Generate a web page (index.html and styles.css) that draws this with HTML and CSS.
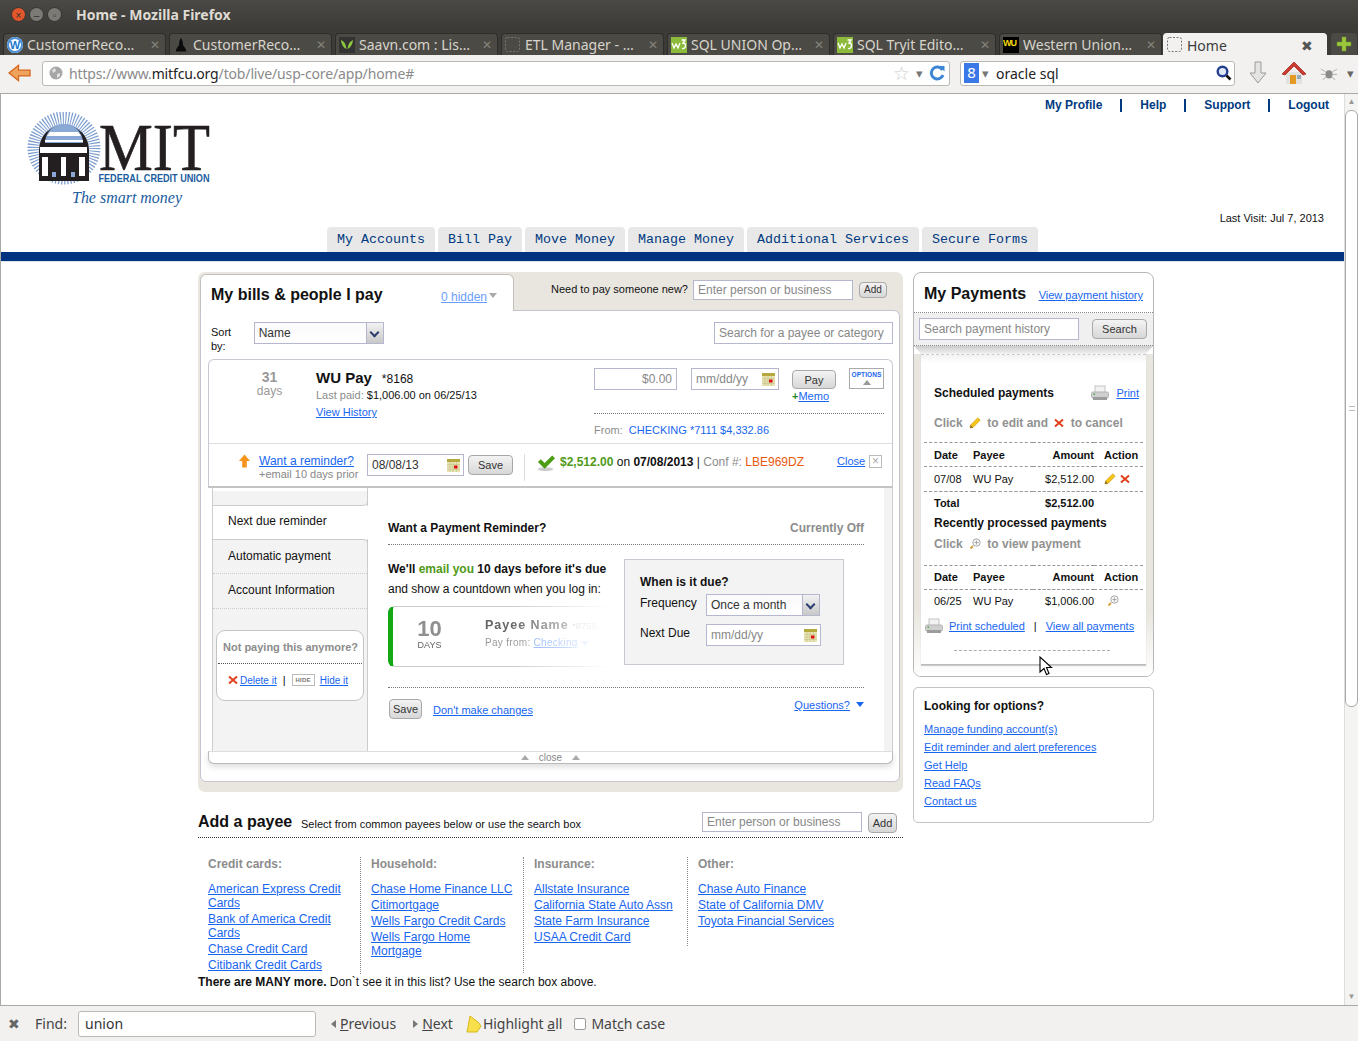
FILE: index.html
```html
<!DOCTYPE html>
<html lang="en">
<head>
<meta charset="utf-8">
<title>Home - Mozilla Firefox</title>
<link rel="stylesheet" href="styles.css">
</head>
<body>
<svg class="defs" width="0" height="0" aria-hidden="true">
  <symbol id="i-cal" viewBox="0 0 13 13">
    <rect x="0" y="0" width="13" height="13" fill="#e9e4b4"/>
    <rect x="0" y="0" width="13" height="3" fill="#b5a93e"/>
    <path d="M0 5.5h13M0 8h13M0 10.5h13M3 3v10M6 3v10M9.500 3v10" stroke="#c9c48c" stroke-width=".7"/>
    <rect x="7" y="6.500" width="3.500" height="3" fill="#e01010"/>
  </symbol>
  <symbol id="i-pencil" viewBox="0 0 12 12">
    <path d="M8.800.8l2.400 2.400L4 10.400 1 11l.6-3z" fill="#f5c518" stroke="#c9930a" stroke-width=".6"/>
    <path d="M1.600 8L1 11l3-.6z" fill="#8a6a20"/>
  </symbol>
  <symbol id="i-x" viewBox="0 0 10 10">
    <path d="M1 1.500L9 8.500M9 1.500L1 8.500" stroke="#e0401c" stroke-width="2"/>
  </symbol>
  <symbol id="i-mag" viewBox="0 0 12 12">
    <path d="M1.500 10.500L4 8" stroke="#d9a040" stroke-width="2"/>
    <circle cx="7.500" cy="4.500" r="3.700" fill="#f4f4f4" stroke="#aaa"/>
    <path d="M5.500 4.500h4M7.500 2.500v4" stroke="#999" stroke-width=".8"/>
  </symbol>
  <symbol id="i-printer" viewBox="0 0 18 16">
    <rect x="4" y="1" width="10" height="7" fill="#f2f2f2" stroke="#c4c4c4"/>
    <rect x="0.500" y="7" width="17" height="6" rx="1.500" fill="#cfcfcf" stroke="#b4b4b4"/>
    <rect x="2" y="12" width="14" height="3" fill="#9c9c9c"/>
    <rect x="2.500" y="8.500" width="1.500" height="1.500" fill="#3ab53a"/>
  </symbol>
  <symbol id="i-w3" viewBox="0 0 16 16">
    <rect width="16" height="16" fill="#8cbb3c"/>
    <path d="M1 6l2 5 2-4 2 4 2-5" fill="none" stroke="#fff" stroke-width="1.300"/>
    <path d="M10.500 3h3.500l-2 3c1.500 0 2.500 1 2.500 2.500S13.500 12 11 11.500" fill="none" stroke="#fff" stroke-width="1.400"/>
  </symbol>
  <symbol id="i-dash" viewBox="0 0 16 16">
    <rect x=".5" y=".5" width="14" height="14" rx="2" fill="none" stroke="#777" stroke-dasharray="2 1.500"/>
  </symbol>
</svg>

<div class="window">
  <header class="titlebar">
    <div class="wm">
      <span class="wm-btn wm-close">×</span>
      <span class="wm-btn">–</span>
      <span class="wm-btn">▫</span>
    </div>
    <div class="wintitle">Home - Mozilla Firefox</div>
  </header>

  <div class="tabstrip">
    <div class="tab"><span class="fav fav-w">W</span><span class="tab-label">CustomerReco…</span><span class="tab-x">✕</span></div>
    <div class="tab">
      <svg class="fav" viewBox="0 0 16 16"><path d="M8 1c1.500 2 2 4 2 7l3 4.500v2H3v-2L6 8c0-3 .5-5 2-7z" fill="#0c0c0c"/></svg>
      <span class="tab-label">CustomerReco…</span><span class="tab-x">✕</span></div>
    <div class="tab">
      <svg class="fav" viewBox="0 0 16 16"><rect width="16" height="16" fill="#333"/><path d="M2 3c3 1 5 4 5.500 9C5 11 2.500 8 2 3zM14 3c-3 1-5 4-5.500 9C11 11 13.500 8 14 3z" fill="#8fc63f"/></svg>
      <span class="tab-label">Saavn.com : Lis…</span><span class="tab-x">✕</span></div>
    <div class="tab"><svg class="fav"><use href="#i-dash"/></svg><span class="tab-label">ETL Manager - …</span><span class="tab-x">✕</span></div>
    <div class="tab"><svg class="fav"><use href="#i-w3"/></svg><span class="tab-label">SQL UNION Op…</span><span class="tab-x">✕</span></div>
    <div class="tab"><svg class="fav"><use href="#i-w3"/></svg><span class="tab-label">SQL Tryit Edito…</span><span class="tab-x">✕</span></div>
    <div class="tab">
      <span class="fav fav-wu">WU</span>
      <span class="tab-label">Western Union…</span><span class="tab-x">✕</span></div>
    <div class="tab tab-active"><svg class="fav"><use href="#i-dash"/></svg><span class="tab-label">Home</span><span class="tab-x">✖</span></div>
    <div class="tab-new">
      <svg viewBox="0 0 16 16" width="16" height="16"><path d="M6 1h4v5h5v4h-5v5H6v-5H1V6h5z" fill="#9bc83c" stroke="#6f9424" stroke-width=".6"/></svg>
    </div>
  </div>

  <div class="navbar">
    <svg class="back" viewBox="0 0 24 20" width="23" height="20"><path d="M1 10L11 2v5h12v6H11v5z" fill="#f0a35c" stroke="#d2661d" stroke-width="1.300"/></svg>
    <div class="urlbar">
      <svg class="globe" viewBox="0 0 14 14" width="14" height="14"><circle cx="7" cy="7" r="6.500" fill="#a6a6a6"/><path d="M3 4l3-2 1 3-3 2zM8 8l3-1 0 3-3 2z" fill="#e2e2e2"/></svg>
      <span class="url">https://www.<b>mitfcu.org</b>/tob/live/usp-core/app/home#</span>
      <span class="star">☆</span>
      <span class="dd">▾</span>
      <svg class="reload" viewBox="0 0 16 16" width="16" height="16"><path d="M13.500 5A6 6 0 1 0 14 10" fill="none" stroke="#3c86d4" stroke-width="3"/><path d="M10 1l5.500 0 0 5.500z" fill="#3c86d4"/></svg>
    </div>
    <div class="searchbar">
      <span class="goog">8</span>
      <span class="dd">▾</span>
      <span class="search-text">oracle sql</span>
      <svg class="mag" viewBox="0 0 16 16" width="16" height="16"><circle cx="6.500" cy="6.500" r="4.800" fill="#dfe8f6" stroke="#243f8f" stroke-width="2.400"/><path d="M10.500 10.500l4 4" stroke="#111" stroke-width="2.600"/></svg>
    </div>
    <svg class="dl" viewBox="0 0 20 26" width="20" height="26"><path d="M7 2h6v11h5l-8 10-8-10h5z" fill="#e4e4e2" stroke="#9a9a98"/></svg>
    <svg class="home" viewBox="0 0 26 26" width="26" height="26"><rect x="5" y="12" width="16" height="12" fill="#e2e2e0"/><rect x="9" y="15" width="6" height="9" fill="#e49a22"/><rect x="16" y="15" width="4" height="4" fill="#9ab"/><path d="M1 14L13 2l12 12-3 1-9-9-9 9z" fill="#cc3a30" stroke="#9c2318" stroke-width=".7"/></svg>
    <svg class="bug" viewBox="0 0 20 16" width="18" height="15"><ellipse cx="10" cy="9" rx="4" ry="4.500" fill="#8b8b8b"/><path d="M6 6L1 3M14 6l5-3M6 9H1M14 9h5M7 12l-4 3M13 12l4 3" stroke="#aaa"/></svg>
    <span class="menu-dd">▾</span>
  </div>

  <div class="viewport">
    <main class="page">
      <div class="head">
        <a class="logo" href="#" aria-label="MIT Federal Credit Union">
          <svg viewBox="0 0 184 96" width="184" height="96">
            <circle cx="38" cy="36" r="29" fill="none" stroke="#7b9dcf" stroke-width="15" stroke-dasharray="1.100 1.500"/>
            <circle cx="38" cy="36" r="24" fill="#8aa8d6"/>
            <path d="M13 38a25 25 0 0 1 50 0v31H13z" fill="#231f20"/>
            <path d="M19 31a19 19 0 0 1 38 0z" fill="#8aa8d6"/>
            <path d="M24 20h28l3 4H21zM19 28h38v2H19z" fill="#fff"/>
            <rect x="14" y="35" width="47" height="6" fill="#fff"/>
            <path d="M16 45h6v19h-6zM35 45h5v19h-5zM53 45h6v19h-6z" fill="#fff"/>
            <path d="M26 60h4v5h-4zM45 60h4v5h-4z" fill="#8aa8d6"/>
            <rect x="9" y="69" width="10" height="0" fill="#231f20"/>
            <text class="logo-mit" x="73" y="58" textLength="111" lengthAdjust="spacingAndGlyphs">MIT</text>
            <text class="logo-fcu" x="72.500" y="70" textLength="111" lengthAdjust="spacingAndGlyphs">FEDERAL CREDIT UNION</text>
            <text class="logo-tag" x="46" y="91" textLength="110" lengthAdjust="spacingAndGlyphs">The smart money</text>
          </svg>
        </a>
        <div class="head-right">
          <nav class="util">
            <a href="#">My Profile</a>
            <a href="#">Help</a>
            <a href="#">Support</a>
            <a href="#">Logout</a>
          </nav>
          <div class="lastvisit">Last Visit: Jul 7, 2013</div>
        </div>
      </div>

      <nav class="mainnav">
        <a href="#">My Accounts</a>
        <a href="#">Bill Pay</a>
        <a href="#">Move Money</a>
        <a href="#">Manage Money</a>
        <a href="#">Additional Services</a>
        <a href="#">Secure Forms</a>
      </nav>
      <div class="bluebar"></div>

      <div class="columns">
        <div class="col-left">
          <section class="bills">
            <div class="bills-top">
              <div class="bills-tab">
                <h1>My bills &amp; people I pay</h1>
                <a class="hidden-link" href="#">0 hidden</a><span class="tri-grey"></span>
              </div>
              <div class="newpay">
                <span class="newpay-label">Need to pay someone new?</span>
                <input class="field newpay-input" placeholder="Enter person or business">
                <button class="btn btn-small">Add</button>
              </div>
            </div>
            <div class="bills-panel">
              <div class="sortrow">
                <span class="sort-label">Sort by:</span>
                <div class="select sort-select"><span>Name</span><i class="select-arrow"></i></div>
                <input class="field payee-search" placeholder="Search for a payee or category">
              </div>

              <div class="card">
                <div class="card-top">
                  <div class="days"><b>31</b><span>days</span></div>
                  <div class="payee">
                    <div class="payee-name"><b>WU Pay</b><span>*8168</span></div>
                    <div class="lastpaid"><span class="grey">Last paid:</span> $1,006.00 on 06/25/13</div>
                    <a class="small-link" href="#">View History</a>
                  </div>
                  <div class="payform">
                    <div class="payform-row">
                      <input class="field amt" placeholder="$0.00">
                      <div class="field date-field date-pay"><span class="ph">mm/dd/yy</span><svg class="cal"><use href="#i-cal"/></svg></div>
                      <div class="paybox">
                        <button class="btn btn-pay">Pay</button>
                        <div class="memo"><span class="plus">+</span><a href="#">Memo</a></div>
                      </div>
                      <div class="options">OPTIONS<i></i></div>
                    </div>
                    <div class="from"><span class="grey">From:</span> <a href="#">CHECKING *7111 $4,332.86</a></div>
                  </div>
                </div>
                <div class="card-bottom">
                  <svg class="up-arrow" viewBox="0 0 14 14" width="13" height="14"><path d="M7 0l6 7H9.500v7h-5V7H1z" fill="#f7941d"/></svg>
                  <div class="reminder-link"><a href="#">Want a reminder?</a><span>+email 10 days prior</span></div>
                  <div class="field date-field date-rem"><span>08/08/13</span><svg class="cal"><use href="#i-cal"/></svg></div>
                  <button class="btn btn-save">Save</button>
                  <div class="conf">
                    <svg class="check" viewBox="0 0 20 18" width="19" height="18"><ellipse cx="9" cy="15.500" rx="8" ry="2" fill="#ccc"/><path d="M1 8l3-3 4 4 8-8 3 3L8 15z" fill="#4b9d14"/></svg>
                    <span class="conf-text"><b class="green">$2,512.00</b> on <b>07/08/2013</b> | <span class="grey">Conf #:</span> <span class="orange">LBE969DZ</span></span>
                  </div>
                  <a class="close-link" href="#">Close</a>
                  <span class="close-box">×</span>
                </div>
              </div>

              <div class="drawer">
                <aside class="side">
                  <div class="side-cap"></div>
                  <div class="side-item side-active">Next due reminder</div>
                  <div class="side-rest">
                    <div class="side-item">Automatic payment</div>
                    <div class="side-item">Account Information</div>
                    <div class="notpaying">
                      <div class="notpaying-title">Not paying this anymore?</div>
                      <div class="notpaying-links">
                        <svg class="ic-x"><use href="#i-x"/></svg><a href="#">Delete it</a>
                        <span class="sep">|</span>
                        <span class="hide-badge">HIDE</span><a href="#">Hide it</a>
                      </div>
                    </div>
                  </div>
                </aside>
                <div class="drawer-main">
                  <div class="dm-head"><b>Want a Payment Reminder?</b><b class="grey">Currently Off</b></div>
                  <div class="dm-body">
                    <div class="dm-left">
                      <p class="dm-line"><b>We'll <span class="green">email you</span> 10 days before it's due</b></p>
                      <p class="dm-line">and show a countdown when you log in:</p>
                      <div class="preview">
                        <div class="preview-days"><b>10</b><span>DAYS</span></div>
                        <div class="preview-info">
                          <div class="preview-name"><b>Payee Name</b> <span>*8756</span></div>
                          <div class="preview-from">Pay from: <a href="#">Checking</a> <i></i></div>
                        </div>
                      </div>
                    </div>
                    <div class="duebox">
                      <div class="duebox-title">When is it due?</div>
                      <div class="due-row"><span class="due-label">Frequency</span><div class="select freq-select"><span>Once a month</span><i class="select-arrow"></i></div></div>
                      <div class="due-row"><span class="due-label">Next Due</span><div class="field date-field date-due"><span class="ph">mm/dd/yy</span><svg class="cal"><use href="#i-cal"/></svg></div></div>
                    </div>
                  </div>
                  <div class="dm-foot">
                    <button class="btn btn-save2">Save</button>
                    <a href="#" class="nochange">Don't make changes</a>
                    <a href="#" class="questions">Questions? <span> </span></a><i class="tri-blue"></i>
                  </div>
                </div>
                <div class="drawer-strip"></div>
              </div>
              <div class="closebar"><i class="tri-up"></i><span>close</span><i class="tri-up"></i></div>
            </div>
          </section>

          <section class="addpayee">
            <div class="add-head">
              <h2>Add a payee</h2>
              <span class="add-sub">Select from common payees below or use the search box</span>
              <input class="field add-input" placeholder="Enter person or business">
              <button class="btn btn-add">Add</button>
            </div>
            <div class="add-cols">
              <div class="add-col">
                <h3>Credit cards:</h3>
                <a href="#">American Express Credit Cards</a>
                <a href="#">Bank of America Credit Cards</a>
                <a href="#">Chase Credit Card</a>
                <a href="#">Citibank Credit Cards</a>
              </div>
              <div class="add-col">
                <h3>Household:</h3>
                <a href="#">Chase Home Finance LLC</a>
                <a href="#">Citimortgage</a>
                <a href="#">Wells Fargo Credit Cards</a>
                <a href="#">Wells Fargo Home Mortgage</a>
              </div>
              <div class="add-col">
                <h3>Insurance:</h3>
                <a href="#">Allstate Insurance</a>
                <a href="#">California State Auto Assn</a>
                <a href="#">State Farm Insurance</a>
                <a href="#">USAA Credit Card</a>
              </div>
              <div class="add-col add-col-last">
                <h3>Other:</h3>
                <a href="#">Chase Auto Finance</a>
                <a href="#">State of California DMV</a>
                <a href="#">Toyota Financial Services</a>
              </div>
            </div>
            <p class="many"><b>There are MANY more.</b> Don`t see it in this list? Use the search box above.</p>
          </section>
        </div>

        <div class="col-right">
          <section class="payments">
            <div class="pay-head"><h2>My Payments</h2><a href="#">View payment history</a></div>
            <div class="pay-search">
              <input class="field hist-input" placeholder="Search payment history">
              <button class="btn btn-search">Search</button>
            </div>
            <div class="tray"></div>
            <div class="paper-wrap">
              <div class="paper">
                <div class="sched-head"><b>Scheduled payments</b><svg class="printer"><use href="#i-printer"/></svg><a href="#">Print</a></div>
                <div class="hint">Click <svg class="ic-pencil"><use href="#i-pencil"/></svg> to edit and <svg class="ic-x"><use href="#i-x"/></svg> to cancel</div>
                <table class="ptable">
                  <thead><tr><th class="c-date">Date</th><th class="c-payee">Payee</th><th class="c-amt">Amount</th><th class="c-act">Action</th></tr></thead>
                  <tbody><tr class="row-data"><td class="c-date">07/08</td><td>WU Pay</td><td class="c-amt">$2,512.00</td><td class="c-act"><svg class="ic-pencil"><use href="#i-pencil"/></svg><svg class="ic-x ic-x-gap"><use href="#i-x"/></svg></td></tr></tbody>
                  <tfoot><tr class="row-total"><td class="c-date">Total</td><td></td><td class="c-amt">$2,512.00</td><td></td></tr></tfoot>
                </table>
                <div class="recent-title">Recently processed payments</div>
                <div class="hint hint2">Click <svg class="ic-mag"><use href="#i-mag"/></svg> to view payment</div>
                <table class="ptable">
                  <thead><tr><th class="c-date">Date</th><th class="c-payee">Payee</th><th class="c-amt">Amount</th><th class="c-act">Action</th></tr></thead>
                  <tbody><tr class="row-plain"><td class="c-date">06/25</td><td>WU Pay</td><td class="c-amt">$1,006.00</td><td class="c-act"><svg class="ic-mag"><use href="#i-mag"/></svg></td></tr></tbody>
                </table>
                <div class="paper-links"><svg class="printer"><use href="#i-printer"/></svg><a href="#">Print scheduled</a><span>|</span><a href="#">View all payments</a></div>
                <div class="paper-dash"></div>
              </div>
            </div>
          </section>

          <section class="options-box">
            <h3>Looking for options?</h3>
            <a href="#">Manage funding account(s)</a>
            <a href="#">Edit reminder and alert preferences</a>
            <a href="#">Get Help</a>
            <a href="#">Read FAQs</a>
            <a href="#">Contact us</a>
          </section>
        </div>
      </div>
      <svg class="cursor" viewBox="0 0 14 20" width="14" height="20"><path d="M1 1v15l4-3.500 2.500 6 2.500-1-2.500-6H12.500z" fill="#fff" stroke="#000" stroke-width="1.100"/></svg>
    </main>
    <div class="scrollbar">
      <div class="sb-btn">▲</div>
      <div class="sb-thumb"><span></span></div>
      <div class="sb-track"></div>
      <div class="sb-btn">▼</div>
    </div>
  </div>

  <footer class="findbar">
    <span class="find-close">✖</span>
    <span class="find-label">Find:</span>
    <input class="find-input" value="union">
    <span class="find-tri find-prev"></span><span class="find-btn"><u>P</u>revious</span>
    <span class="find-tri find-next"></span><span class="find-btn"><u>N</u>ext</span>
    <svg class="hl" viewBox="0 0 16 18" width="16" height="18"><path d="M4 1l8 6 3 4-4 6H1l1-5z" fill="#f7e04a" stroke="#d8b51c"/></svg>
    <span class="find-btn find-hl">Highlight <u>a</u>ll</span>
    <span class="find-check"></span>
    <span class="find-btn">Mat<u>c</u>h case</span>
  </footer>
</div>
</body>
</html>
```

FILE: styles.css
```css
* { box-sizing: border-box; }
html, body { margin: 0; padding: 0; height: 100%; overflow: hidden; }
body { font-family: "Liberation Sans", Arial, sans-serif; font-size: 12px; color: #111; background: #fff; }
a { color: #1766f0; }
b { font-weight: bold; }
p { margin: 0; }
h1, h2, h3 { margin: 0; }
.defs { position: absolute; }
.window { width: 1358px; height: 1041px; display: flex; flex-direction: column; }

/* ---- window chrome ---- */
.titlebar { height: 28px; background: linear-gradient(#4a4945, #3c3b37); display: flex; align-items: center; padding-left: 11px; flex: none; }
.wm { display: flex; gap: 3px; width: 65px; }
.wm-btn { width: 15px; height: 15px; border-radius: 50%; background: #7b7a74; color: #333; font-size: 10px; line-height: 15px; text-align: center; border: 1px solid #333; }
.wm-close { background: #e2562b; }
.wintitle { font-family: "Noto Sans", sans-serif; font-weight: 700; font-size: 14px; color: #dfdbd2; }

.tabstrip { height: 27px; background: #3c3b37; display: flex; flex: none; padding: 5px 0 0 3px; gap: 3px; }
.tab { width: 163px; height: 22px; background: #4b4a45; border: 1px solid #2e2d2a; border-bottom: 0; border-radius: 4px 4px 0 0; display: flex; align-items: center; padding: 0 5px 0 3px; color: #d8d5cc; font-family: "Noto Sans", sans-serif; font-size: 14px; }
.tab:nth-child(8) { margin-left: -2px; }
.fav { width: 16px; height: 16px; margin-right: 4px; flex: none; }
.fav-w { background: #fff; border-radius: 50%; color: #1a7ad0; font: bold 11px/16px "Liberation Sans", sans-serif; text-align: center; box-shadow: inset 0 0 0 2px #4a90d9; }
.fav-wu { background: #000; color: #f5d90a; font: bold 9px/13px "Liberation Sans", sans-serif; letter-spacing: -1px; overflow: hidden; }
.tab-label { flex: 1; white-space: nowrap; overflow: hidden; }
.tab-x { font-size: 12px; color: #85837b; }
.tab-active { background: #f2f1f0; color: #3c3c3c; border-color: #f2f1f0; width: 164px; height: 23px; }
.tab-active .tab-x { color: #555; font-size: 14px; margin-right: 8px; }
.tab-active .tab-label { font-size: 14px; }
.tab-new { width: 26px; height: 22px; background: #4b4a45; border-radius: 4px 4px 0 0; display: flex; align-items: center; justify-content: center; margin-left: 1px; }

.navbar { height: 39px; background: #f2f1f0; border-bottom: 1px solid #a8a8a6; display: flex; align-items: center; flex: none; padding: 0 0 2px 8px; }
.back { margin-right: 11px; }
.urlbar { width: 908px; height: 25px; background: #fff; border: 1px solid #b9b9b6; border-radius: 3px; display: flex; align-items: center; padding: 0 3px 0 6px; font-family: "Noto Sans", sans-serif; font-size: 14px; color: #8a8a8a; }
.globe { margin-right: 6px; }
.url { flex: 1; white-space: nowrap; letter-spacing: -.15px; }
.url b { font-weight: normal; color: #222; }
.star { font-size: 19px; color: #ccc; margin-right: 6px; line-height: 1; }
.dd { color: #777; font-size: 13px; margin-right: 6px; }
.reload { margin-right: 1px; }
.searchbar { width: 275px; height: 25px; margin-left: 10px; background: #fff; border: 1px solid #b9b9b6; border-radius: 3px; display: flex; align-items: center; padding: 0 2px 0 3px; font-family: "Noto Sans", sans-serif; font-size: 14px; color: #222; }
.goog { width: 15px; height: 20px; background: #3b78e7; color: #fff; font-size: 15px; line-height: 19px; text-align: center; margin-right: 3px; }
.search-text { flex: 1; margin-left: 1px; }
.dl { margin-left: 13px; }
.home { margin-left: 13px; }
.bug { margin-left: 13px; }
.menu-dd { color: #666; font-size: 13px; margin-left: 9px; }

.viewport { flex: 1; display: flex; min-height: 0; }
.page { position: relative; flex: 1; border-left: 1px solid #a9a9a6; overflow: hidden; }
.scrollbar { width: 14px; display: flex; flex-direction: column; background: #f4f4f3; border-left: 1px solid #ddd; }
.sb-btn { height: 16px; font-size: 8px; line-height: 16px; text-align: center; color: #999; }
.sb-thumb { height: 597px; background: #fff; border: 1px solid #aaa; border-radius: 6px; display: flex; align-items: center; justify-content: center; }
.sb-thumb span { width: 6px; height: 5px; border-top: 1px solid #bbb; border-bottom: 1px solid #bbb; }
.sb-track { flex: 1; }

/* ---- site header ---- */
.head { height: 133px; display: flex; justify-content: space-between; }
.logo { display: block; margin: 18px 0 0 25px; height: 96px; }
.logo svg { display: block; }
.logo-mit { font: 68px "Liberation Serif", serif; fill: #231f20; stroke: #231f20; stroke-width: .6; }
.logo-fcu { font: bold 11px "Liberation Sans", sans-serif; fill: #1a5c9e; }
.logo-tag { font: italic 17px "Liberation Serif", serif; fill: #1a5c9e; }
.head-right { display: flex; flex-direction: column; align-items: flex-end; justify-content: space-between; padding: 5px 14px 2px 0; }
.util { display: flex; font-weight: bold; padding-right: 1px; }
.util a { color: #003a80; text-decoration: none; line-height: 13px; padding: 0 18px; border-left: 2px solid #003a80; }
.util a:first-child { border-left: 0; }
.util a:last-child { padding-right: 0; }
.lastvisit { font-size: 11px; line-height: 13px; color: #111; padding-right: 6px; }

.mainnav { display: flex; gap: 3px; height: 25px; padding-left: 326px; }
.mainnav a { font-family: "Liberation Mono", monospace; font-size: 13.333px; line-height: 25px; height: 25px; padding: 0 10px; background: #e8e8e8; color: #003a80; text-decoration: none; border-radius: 4px 4px 0 0; white-space: pre; }
.bluebar { height: 9px; background: #00337f; box-shadow: 0 1px 0 #dfe4ee; }

.columns { display: flex; gap: 10px; padding: 11px 0 0 197px; }
.col-left { width: 705px; flex: none; }
.col-right { width: 241px; flex: none; display: flex; flex-direction: column; gap: 10px; }

/* ---- form bits ---- */
.field { display: block; height: 22px; border: 1px solid #b4b7ce; background: #fff; padding: 0 4px; font: 12px "Liberation Sans", sans-serif; color: #333; outline: 0; }
.field::placeholder { color: #888; opacity: 1; }
.btn { font: 11px "Liberation Sans", sans-serif; color: #333; background: linear-gradient(#f3f3f3, #d7d7d7); border: 1px solid #a8a8a8; border-radius: 4px; padding: 0; height: 20px; }
.select { display: flex; height: 22px; border: 1px solid #b4b7ce; background: linear-gradient(#fafafa, #fff); align-items: center; padding-left: 4px; color: #333; }
.select span { flex: 1; }
.select-arrow { width: 17px; height: 20px; background: linear-gradient(#f2f2f2, #c8c8c8); border-left: 1px solid #b4b7ce; position: relative; }
.select-arrow::after { content: ""; position: absolute; left: 4px; top: 6px; width: 5px; height: 5px; border-right: 2px solid #2c3e70; border-bottom: 2px solid #2c3e70; transform: rotate(45deg); }
.date-field { display: flex; align-items: center; justify-content: space-between; padding-right: 3px; }
.ph { color: #888; }
.cal { width: 13px; height: 13px; flex: none; }
.grey { color: #8c8c8c; }
.green { color: #4f9a18; }
.orange { color: #e8590c; }

/* ---- bills panel ---- */
.bills { height: 520px; background: #e9e6df; border-radius: 7px; padding: 2px 3px 10px 2px; display: flex; flex-direction: column; }
.bills-top { display: flex; height: 36px; }
.bills-tab { width: 314px; height: 37px; background: #fff; border: 1px solid #c2c0ba; border-bottom: 0; border-radius: 6px 6px 0 0; padding: 0 0 0 10px; display: flex; align-items: center; position: relative; z-index: 1; }
.bills-tab h1 { font-size: 16px; line-height: 20px; width: 230px; margin-top: 4px; }
.hidden-link { color: #6b9dff; margin-top: 7px; }
.tri-grey { width: 0; height: 0; border: 4px solid transparent; border-top: 5px solid #aaa; border-bottom: 0; margin: 5px 0 0 2px; }
.newpay { flex: 1; display: flex; align-items: flex-start; padding: 6px 0 0 37px; }
.newpay-label { font-size: 11px; line-height: 15px; margin: 2px 5px 0 0; }
.newpay-input { width: 160px; height: 20px; }
.btn-small { width: 28px; height: 16px; margin: 2px 0 0 6px; font-size: 10px; line-height: 14px; }
.bills-panel { flex: 1; background: #fff; border: 1px solid #c4c3ce; border-radius: 0 6px 6px 6px; padding: 0 6px 0 7px; position: relative; }
.sortrow { display: flex; align-items: flex-start; height: 48px; padding-top: 11px; }
.sort-label { font-size: 11px; line-height: 14px; margin: 3px 5px 0 3px; }
.sort-select { width: 131px; }
.payee-search { width: 180px; margin-left: 330px; }

.card { height: 129px; border: 1px solid #c8c8d0; border-bottom: 2px solid #c4c4c4; border-radius: 6px 6px 0 0; }
.card-top { height: 84px; display: flex; border-bottom: 1px solid #ddd; }
.days { width: 107px; padding-top: 10px; display: flex; flex-direction: column; align-items: center; padding-left: 14px; color: #999; }
.days b { font-size: 14px; line-height: 15px; color: #999; }
.days span { font-size: 12px; line-height: 13px; }
.payee { width: 278px; padding-top: 9px; }
.payee-name { line-height: 17px; }
.payee-name b { font-size: 15px; margin-right: 10px; }
.lastpaid { font-size: 11px; line-height: 14px; }
.small-link { font-size: 11px; line-height: 14px; display: inline-block; margin-top: 3px; }
.payform { width: 290px; padding-top: 8px; }
.payform-row { display: flex; align-items: flex-start; height: 46px; border-bottom: 1px dotted #777; }
.amt { width: 83px; text-align: right; }
.date-pay { width: 88px; margin-left: 14px; }
.paybox { margin-left: 13px; width: 44px; padding-top: 2px; }
.btn-pay { width: 44px; height: 19px; font-size: 11px; display: block; }
.memo { font-size: 11px; line-height: 12px; margin-top: 1px; white-space: nowrap; }
.plus { color: #2a8a2a; font-weight: bold; }
.options { margin-left: 13px; width: 35px; height: 21px; border: 1px solid #aaa; font: bold 6.5px/9px "Liberation Sans", sans-serif; color: #1766f0; text-align: center; padding-top: 1px; letter-spacing: .1px; }
.options i { display: block; width: 0; height: 0; margin: 1px auto 0; border: 4px solid transparent; border-bottom: 5px solid #999; border-top: 0; }
.from { font-size: 11px; line-height: 14px; padding-top: 9px; }
.from a { text-decoration: none; margin-left: 3px; }

.card-bottom { height: 42px; display: flex; align-items: flex-start; padding-left: 29px; }
.up-arrow { margin-top: 10px; flex: none; }
.reminder-link { width: 108px; margin-left: 8px; padding-top: 10px; }
.reminder-link a { display: block; line-height: 14px; }
.reminder-link span { display: block; font-size: 11px; line-height: 12px; color: #888; white-space: nowrap; }
.date-rem { width: 97px; height: 22px; margin-top: 10px; }
.btn-save { width: 45px; margin: 11px 0 0 4px; height: 20px; }
.conf { margin: 10px 0 0 11px; border-left: 1px solid #ddd; height: 27px; padding-left: 12px; display: flex; width: 301px; align-items: flex-start; }
.check { flex: none; margin: 0 4px 0 0; }
.conf-text { white-space: nowrap; line-height: 14px; margin-top: 1px; }
.close-link { font-size: 11px; margin: 11px 0 0 12px; line-height: 13px; width: 32px; }
.close-box { width: 13px; height: 13px; border: 1px solid #bbb; margin-top: 11px; color: #aaa; font-size: 12px; line-height: 11px; text-align: center; }

.drawer { height: 263px; margin-left: 4px; display: flex; }
.side { width: 156px; flex: none; border-left: 1px solid #ccc; border-right: 1px solid #ccc; display: flex; flex-direction: column; padding-top: 3px; position: relative; }
.side-cap { height: 15px; background: #f3f3f3; border-right: 1px solid #ccc; border-bottom: 1px solid #ccc; border-radius: 0 0 5px 0; margin-right: -1px; }
.side-item { height: 34px; line-height: 33px; padding-left: 15px; border-bottom: 1px dotted #ccc; }
.side-active { height: 33px; background: #fff; border-bottom: 0; margin-right: -1px; line-height: 31px; }
.side-rest { flex: 1; background: #f3f3f3; border-top: 1px solid #ccc; border-radius: 0 5px 0 0; margin-right: -1px; border-right: 1px solid #ccc; }
.side-rest .side-item:nth-child(2) { height: 35px; }
.notpaying { margin: 21px 0 0 3px; width: 148px; height: 71px; background: #fff; border: 1px solid #c4c4c4; border-radius: 9px; padding: 0 1px; }
.notpaying-title { font-size: 11px; font-weight: bold; color: #8c8c8c; line-height: 14px; padding: 9px 0 9px 5px; border-bottom: 1px dotted #555; white-space: nowrap; }
.notpaying-links { display: flex; align-items: center; font-size: 10px; padding: 10px 0 0 7px; }
.notpaying-links .ic-x { margin-right: 2px; }
.notpaying-links .sep { margin: 0 6px; font-size: 11px; }
.hide-badge { border: 1px solid #bbb; font: bold 6px/10px "Liberation Sans", sans-serif; color: #777; padding: 0 3px; margin-right: 5px; height: 12px; letter-spacing: .2px; }
.drawer-main { flex: 1; padding: 0 20px 0 20px; width: 512px; background: #fff; }
.dm-head { display: flex; justify-content: space-between; height: 57px; padding-top: 33px; border-bottom: 1px dotted #777; line-height: 14px; }
.dm-body { display: flex; height: 143px; padding-top: 14px; border-bottom: 1px dotted #777; }
.dm-left { width: 236px; }
.dm-line { line-height: 20px; white-space: nowrap; }
.preview { margin-top: 7px; width: 222px; height: 61px; border: 1px solid #ccc; border-left: 5px solid #14a814; border-right: 0; border-radius: 6px 0 0 6px; background: linear-gradient(90deg, #fff 70%, #fff); display: flex; border-image: none; mask-image: linear-gradient(90deg, #000 55%, transparent 100%); -webkit-mask-image: linear-gradient(90deg, #000 55%, transparent 100%); }
.preview-days { width: 92px; display: flex; flex-direction: column; align-items: center; padding: 11px 19px 0 0; }
.preview-days b { font-size: 22px; line-height: 22px; color: #8f8f8f; }
.preview-days span { font-size: 9px; line-height: 11px; color: #666; }
.preview-info { padding-top: 11px; white-space: nowrap; }
.preview-name b { font-size: 12.5px; color: #666; letter-spacing: 1px; }
.preview-name span { font-size: 9.5px; color: #bbb; }
.preview-from { font-size: 10px; color: #999; margin-top: 5px; letter-spacing: .3px; }
.preview-from a { color: #7daaff; }
.preview-from i { display: inline-block; border: 4px solid transparent; border-top: 5px solid #c4d6ff; border-bottom: 0; }
.duebox { width: 220px; height: 106px; background: #f3f3f3; border: 1px solid #c8c8d0; padding: 15px 0 0 15px; }
.duebox-title { font-weight: bold; line-height: 14px; margin-bottom: 5px; }
.due-row { display: flex; align-items: flex-start; height: 30px; }
.due-label { width: 66px; line-height: 14px; padding-top: 2px; }
.freq-select { width: 114px; }
.date-due { width: 115px; margin-top: 0; }
.dm-foot { display: flex; align-items: flex-start; padding-top: 11px; position: relative; }
.btn-save2 { width: 33px; height: 20px; margin-left: 1px; }
.nochange { font-size: 11px; margin: 5px 0 0 11px; line-height: 13px; }
.questions { font-size: 11px; margin: 0 0 0 auto; line-height: 13px; padding-right: 6px; }
.tri-blue { width: 0; height: 0; border: 4px solid transparent; border-top: 5px solid #1766f0; border-bottom: 0; margin-top: 3px; }
.drawer-strip { width: 8px; background: #f3f3f3; border-right: 1px solid #ccc; box-sizing: content-box; flex: none; }
.closebar { height: 13px; margin-top: 0; border: 1px solid #bbb; border-top: 1px solid #ddd; border-radius: 0 0 6px 6px; background: #fff; box-shadow: 0 3px 6px #ddd; display: flex; align-items: center; justify-content: center; gap: 10px; color: #888; font-size: 10px; line-height: 11px; }
.tri-up { width: 0; height: 0; border: 4px solid transparent; border-bottom: 5px solid #aaa; border-top: 0; }

/* ---- add payee ---- */
.addpayee { padding-top: 20px; }
.add-head { display: flex; align-items: flex-start; height: 26px; border-bottom: 1px dotted #333; width: 705px; }
.add-head h2 { font-size: 16px; line-height: 20px; width: 103px; white-space: nowrap; }
.add-sub { font-size: 11px; line-height: 14px; width: 401px; padding-top: 5px; white-space: nowrap; }
.add-input { width: 160px; height: 20px; }
.btn-add { width: 29px; margin: 1px 0 0 6px; height: 20px; }
.add-cols { display: flex; padding-top: 19px; height: 136px; align-items: flex-start; }
.add-col { width: 163px; padding-left: 10px; padding-right: 10px; min-height: 116px; border-right: 1px dotted #888; }
.add-col:nth-child(1) { width: 163px; }
.add-col-last { border-right: 0; }
.add-col:nth-child(3) { min-height: 89px; width: 164px; }
.add-col h3 { font-size: 12px; line-height: 14px; color: #8c8c8c; margin-bottom: 11px; }
.add-col a { display: block; line-height: 14px; margin-bottom: 2px; white-space: normal; }
.many { line-height: 14px; padding-top: 1px; }

/* ---- payments ---- */
.payments { height: 405px; border: 1px solid #b8b8b8; border-radius: 8px; display: flex; flex-direction: column; overflow: hidden; }
.pay-head { height: 40px; display: flex; align-items: flex-start; justify-content: space-between; padding: 11px 10px 0 10px; border-bottom: 1px dotted #888; flex: none; }
.pay-head h2 { font-size: 16px; line-height: 19px; }
.pay-head a { font-size: 11px; margin-top: 5px; }
.pay-search { height: 33px; background: #f0f0f0; display: flex; padding: 5px 6px 0 5px; justify-content: space-between; border-bottom: 1px dotted #888; flex: none; }
.hist-input { width: 160px; }
.btn-search { width: 55px; height: 20px; margin-top: 1px; }
.tray { height: 8px; background: linear-gradient(#ccc, #f2f2f2); clip-path: polygon(0 0, 100% 0, 97% 100%, 3% 100%); flex: none; }
.paper-wrap { flex: 1; padding: 0 7px 11px 7px; background: linear-gradient(#e9e6df 80%, #fff); }
.paper { height: 100%; background: linear-gradient(#f2f2f2, #fff 8px); border: 1px solid #bbb; border-top: 1px dashed #ccc; border-width: 1px 0 1px 0; padding: 0 0 0 3px; box-shadow: 0 1px 1px #ccc; }
.sched-head { display: flex; align-items: center; height: 50px; padding: 25px 7px 0 10px; }
.sched-head b { flex: 1; }
.sched-head a { font-size: 11px; margin-left: 7px; }
.printer { width: 18px; height: 16px; flex: none; }
.hint { font-weight: bold; color: #919191; line-height: 14px; padding: 11px 0 12px 10px; white-space: nowrap; height: 37px; }
.ic-pencil { width: 12px; height: 12px; vertical-align: -2px; margin: 0 3px; }
.ic-x { width: 10px; height: 10px; vertical-align: -1px; margin: 0 3px; }
.ic-mag { width: 12px; height: 12px; vertical-align: -2px; margin: 0 3px; }
.ptable { border-collapse: collapse; width: 219px; table-layout: fixed; font-size: 11px; line-height: 14px; }
.ptable th { font-weight: bold; text-align: left; height: 24px; border-top: 1px dashed #999; border-bottom: 1px dashed #999; padding: 0; }
.ptable td { padding: 0; height: 25px; }
.c-date { width: 49px; padding-left: 10px !important; }
.c-payee { width: 60px; }
.ptable th.c-amt, .c-amt { width: 61px; text-align: right; }
.c-act { width: 49px; padding-left: 10px !important; white-space: nowrap; }
.c-act .ic-pencil { margin: 0; }
.c-act .ic-x-gap { margin: 0 0 0 4px; }
.row-data td { border-bottom: 1px dashed #999; }
.row-total td { font-weight: bold; height: 23px; }
.recent-title { font-weight: bold; line-height: 14px; padding: 1px 0 0 10px; }
.hint2 { padding-top: 7px; height: 35px; padding-bottom: 0; }
.row-plain td { height: 24px; }
.paper-links { display: flex; align-items: center; font-size: 11px; height: 26px; padding-left: 1px; }
.paper-links a { margin-left: 6px; }
.paper-links span { margin: 0 0 0 9px; }
.paper-links span + a { margin-left: 9px; }
.paper-dash { margin: 11px 0 0 30px; width: 156px; border-top: 1px dashed #aaa; }

.options-box { height: 136px; border: 1px solid #c4c4c4; border-radius: 5px; padding: 11px 10px 0 10px; }
.options-box h3 { font-size: 12px; line-height: 14px; margin-bottom: 7px; }
.options-box a { display: block; font-size: 11px; line-height: 18px; }

.cursor { position: absolute; left: 1038px; top: 562px; }

/* ---- find bar ---- */
.findbar { height: 36px; flex: none; background: #f2f1f0; border-top: 1px solid #a9a9a6; display: flex; align-items: center; padding-left: 8px; font-family: "Noto Sans", sans-serif; font-size: 14px; color: #444; }
.find-close { font-size: 14px; color: #666; width: 27px; }
.find-label { width: 43px; }
.find-input { width: 238px; height: 26px; border: 1px solid #b9b9b6; border-radius: 3px; padding: 0 6px; font: 14px "Noto Sans", sans-serif; color: #333; outline: 0; }
.find-tri { width: 0; height: 0; border: 4px solid transparent; margin-right: 4px; }
.find-prev { border-right: 5px solid #777; border-left: 0; margin-left: 15px; }
.find-next { border-left: 5px solid #777; border-right: 0; margin-left: 17px; }
.find-btn { white-space: nowrap; }
.hl { margin: 0 1px 0 13px; }
.find-check { width: 12px; height: 12px; border: 1px solid #999; border-radius: 2px; background: #fff; margin: 0 5px 0 12px; }
```
